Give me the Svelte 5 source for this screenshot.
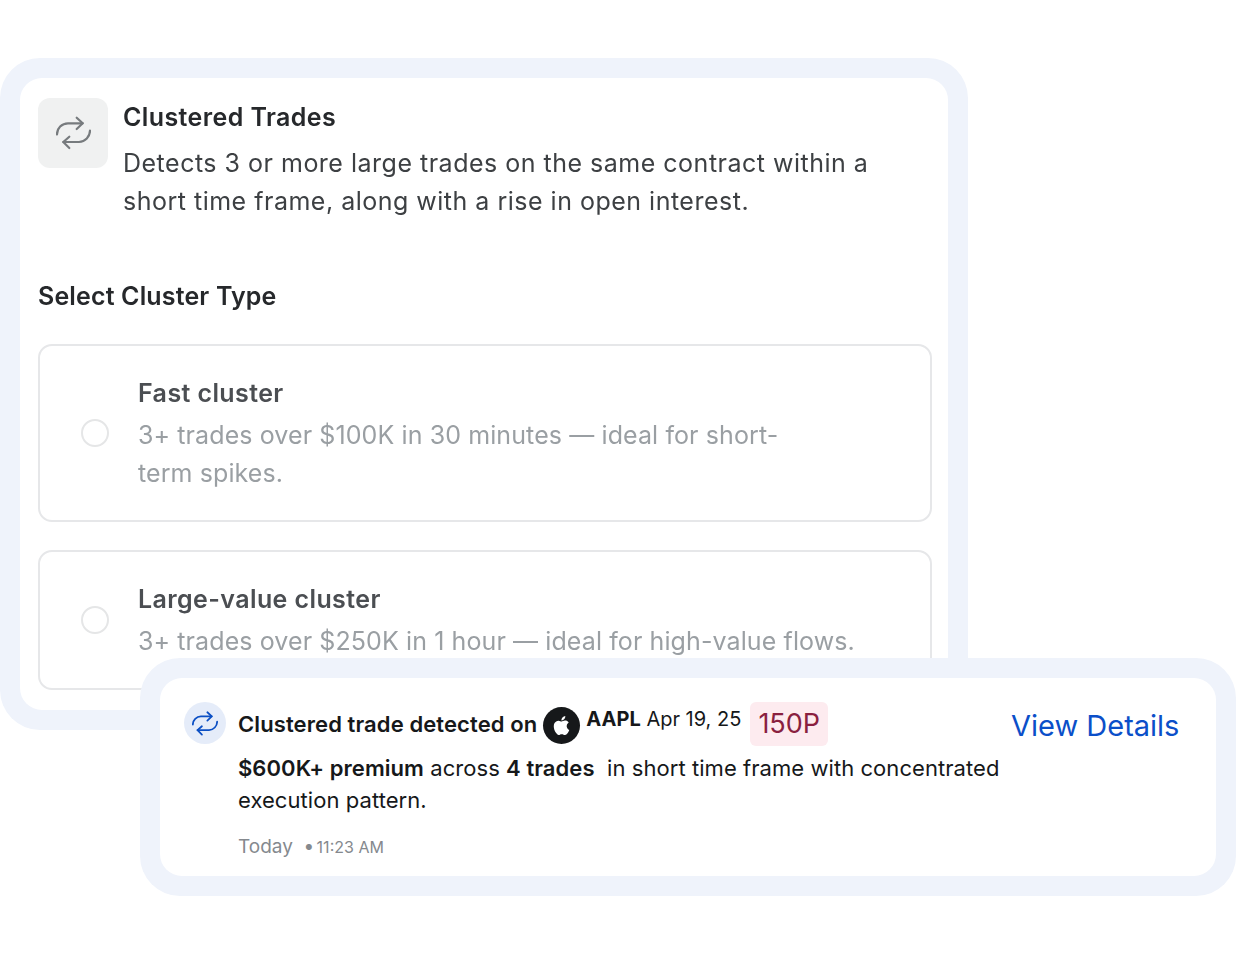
<script lang="ts">
    const options = [
        {
            title: "Fast cluster",
            text: "3+ trades over $100K in 30 minutes — ideal for short-term spikes.",
        },
        {
            title: "Large-value cluster",
            text: "3+ trades over $250K in 1 hour — ideal for high-value flows.",
        },
    ];
</script>

<main class="stage">
    <section class="panel">
        <div class="panel-inner">
            <header class="intro">
                <div class="tile">
                    <svg viewBox="0 0 35 34" width="35" height="34" fill="none" stroke="currentColor" stroke-width="2.2" stroke-linecap="round" stroke-linejoin="round">
                        <path d="M20.700 1.700 26.700 7.300 20.700 13" />
                        <path d="M1 18.500A11 11 0 0 1 12 7.300H26.700" />
                        <path d="M13.300 20.700 7.300 26 13.300 32" />
                        <path d="M34 14.500A11.500 11.500 0 0 1 23 26H7.300" />
                    </svg>
                </div>
                <div class="intro-copy">
                    <h1>Clustered Trades</h1>
                    <p>Detects 3 or more large trades on the same contract within a short time frame, along with a rise in open interest.</p>
                </div>
            </header>

            <h2>Select Cluster Type</h2>

            <div class="options">
                {#each options as option}
                    <div class="option">
                        <span class="radio"></span>
                        <div class="option-copy">
                            <h3>{option.title}</h3>
                            <p>{option.text}</p>
                        </div>
                    </div>
                {/each}
            </div>
        </div>
    </section>

    <aside class="notice">
        <div class="notice-inner">
            <div class="round-icon">
                <svg viewBox="0 0 35 34" width="26" height="25" fill="none" stroke="currentColor" stroke-width="2.400" stroke-linecap="round" stroke-linejoin="round">
                    <path d="M20.700 1.700 26.700 7.300 20.700 13" />
                    <path d="M1 18.500A11 11 0 0 1 12 7.300H26.700" />
                    <path d="M13.300 20.700 7.300 26 13.300 32" />
                    <path d="M34 14.500A11.500 11.500 0 0 1 23 26H7.300" />
                </svg>
            </div>

            <div class="notice-body">
                <div class="headline">
                    <strong class="lead">Clustered trade detected on</strong>
                    <span class="logo">
                        <svg viewBox="0 0 24 24" width="19" height="19" fill="#fff">
                            <path d="M12.152 6.896c-.948 0-2.415-1.078-3.96-1.040-2.040.027-3.910 1.183-4.961 3.014-2.117 3.675-.546 9.103 1.519 12.090 1.013 1.454 2.208 3.090 3.792 3.039 1.520-.065 2.090-.987 3.935-.987 1.831 0 2.350.987 3.960.948 1.637-.026 2.676-1.480 3.676-2.948 1.156-1.688 1.636-3.325 1.662-3.415-.039-.013-3.182-1.221-3.220-4.857-.026-3.040 2.480-4.494 2.597-4.559-1.429-2.090-3.623-2.324-4.390-2.376-2-.156-3.675 1.090-4.610 1.090zM15.530 3.830c.843-1.012 1.400-2.427 1.245-3.830-1.207.052-2.662.805-3.532 1.818-.780.896-1.454 2.338-1.273 3.714 1.338.104 2.715-.688 3.559-1.701" />
                        </svg>
                    </span>
                    <span class="contract"><b>AAPL</b> Apr 19, 25</span>
                    <span class="tag">150P</span>
                </div>
                <p class="summary"><b>$600K+ premium</b> across <b>4 trades</b>&nbsp; in short time frame with concentrated execution pattern.</p>
                <p class="time">Today &nbsp;• <span class="clock">11:23 AM</span></p>
            </div>

            <span class="details">View Details</span>
        </div>
    </aside>
</main>

<style>
    :global(body) {
        background: #fff;
        font-family: Inter, "Liberation Sans", sans-serif;
    }

    .stage {
        position: relative;
        width: 1237px;
        height: 954px;
        padding-top: 58px;
        box-sizing: border-box;
        overflow: hidden;
    }

    .panel {
        width: 968px;
        height: 672px;
        box-sizing: border-box;
        padding: 20px;
        background: #eff3fb;
        border-radius: 40px;
    }

    .panel-inner {
        height: 100%;
        box-sizing: border-box;
        padding: 20px 16px 20px 18px;
        background: #fff;
        border-radius: 22px;
        filter: blur(0.35px);
    }

    .intro {
        display: flex;
        gap: 15px;
    }

    .tile {
        flex: none;
        width: 70px;
        height: 70px;
        display: flex;
        align-items: center;
        justify-content: center;
        background: #f0f1f1;
        border-radius: 12px;
        color: #777b7e;
    }

    .intro-copy {
        max-width: 760px;
    }

    h1 {
        margin: 0;
        font-size: 25px;
        letter-spacing: 0.4px;
        line-height: 38px;
        font-weight: 600;
        color: #26282b;
    }

    .intro-copy p {
        margin: 8px 0 0;
        font-size: 25px;
        letter-spacing: 0.5px;
        line-height: 38px;
        color: #3d4043;
    }

    h2 {
        margin: 57px 0 0;
        font-size: 25px;
        letter-spacing: 0.15px;
        line-height: 38px;
        font-weight: 600;
        color: #26282b;
    }

    .options {
        margin-top: 29px;
        display: flex;
        flex-direction: column;
        gap: 28px;
    }

    .option {
        display: flex;
        align-items: center;
        padding: 28px 40px 28px 41px;
        border: 2px solid #e6e7e9;
        border-radius: 14px;
    }

    .radio {
        flex: none;
        width: 24px;
        height: 24px;
        border: 2px solid #e5e6e7;
        border-radius: 50%;
    }

    .option-copy {
        margin-left: 29px;
        max-width: 660px;
    }

    h3 {
        margin: 0;
        font-size: 25px;
        letter-spacing: 0.4px;
        line-height: 38px;
        font-weight: 600;
        color: #4b4e52;
    }

    .option-copy p {
        margin: 4px 0 0;
        font-size: 25px;
        letter-spacing: 0.1px;
        line-height: 38px;
        color: #9a9fa3;
    }

    .option:last-child .option-copy {
        max-width: none;
    }

    .notice {
        position: absolute;
        left: 140px;
        top: 658px;
        width: 1096px;
        height: 238px;
        box-sizing: border-box;
        padding: 20px;
        background: #eff3fb;
        border-radius: 40px;
    }

    .notice-inner {
        height: 100%;
        box-sizing: border-box;
        display: flex;
        padding: 24px 37px 0 24px;
        background: #fff;
        border-radius: 22px;
    }

    .round-icon {
        flex: none;
        width: 42px;
        height: 42px;
        display: flex;
        align-items: center;
        justify-content: center;
        background: #e5ecf9;
        border-radius: 50%;
        color: #0b4fc4;
    }

    .notice-body {
        flex: none;
        width: 773px;
        margin-left: 12px;
    }

    .headline {
        display: flex;
        align-items: center;
        height: 44px;
        color: #16181a;
    }

    .lead {
        font-size: 22px;
        letter-spacing: 0.1px;
        font-weight: 600;
    }

    .logo {
        flex: none;
        width: 37px;
        height: 37px;
        margin: 2px 6px 0;
        display: flex;
        align-items: center;
        justify-content: center;
        background: #16181a;
        border-radius: 50%;
    }

    .contract {
        font-size: 20px;
        margin-top: -10px;
        white-space: nowrap;
    }

    .contract b {
        font-weight: 700;
    }

    .tag {
        margin-left: 9px;
        padding: 0 8px;
        height: 44px;
        line-height: 44px;
        font-size: 27px;
        color: #8a1f3f;
        background: #fdebef;
        border-radius: 6px;
    }

    .summary {
        margin: 6px 0 0;
        font-size: 22px;
        letter-spacing: 0.06px;
        line-height: 32px;
        color: #16181a;
    }

    .summary b {
        font-weight: 600;
    }

    .time {
        margin: 17px 0 0;
        font-size: 19px;
        line-height: 28px;
        color: #85898e;
    }

    .clock {
        margin-left: -3px;
        font-size: 16px;
    }

    .details {
        margin-left: auto;
        margin-top: 2px;
        font-size: 29px;
        line-height: 44px;
        white-space: nowrap;
        color: #0b4fc9;
    }
</style>
